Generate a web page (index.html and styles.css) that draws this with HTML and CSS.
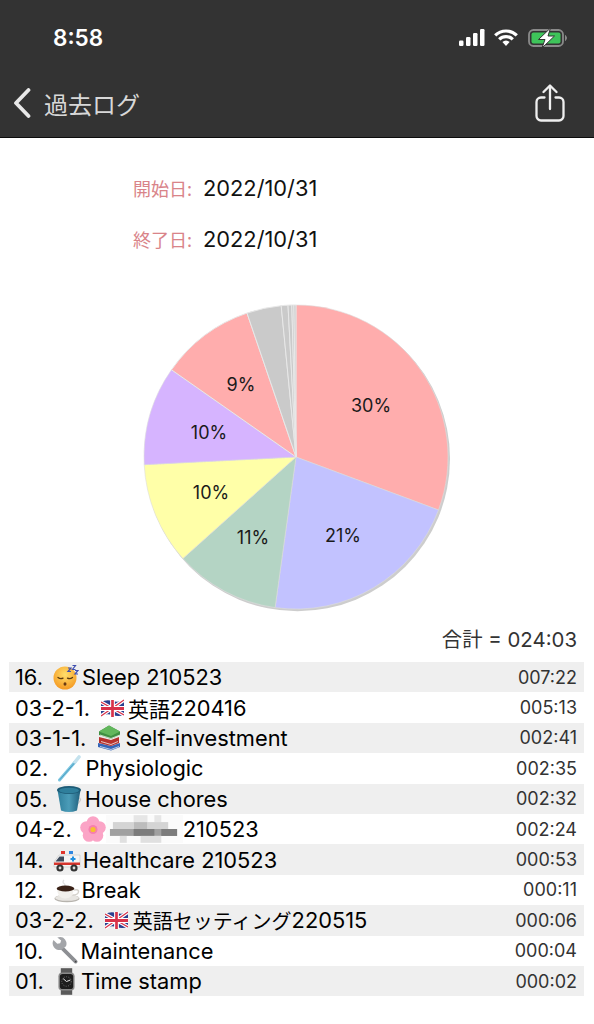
FILE: index.html
```html
<!DOCTYPE html>
<html lang="ja">
<head>
<meta charset="utf-8">
<title>過去ログ</title>
<link rel="stylesheet" href="styles.css">
</head>
<body>
<svg class="defs" width="0" height="0" aria-hidden="true">
  <defs>
    <radialGradient id="faceGrad" cx="50%" cy="35%" r="65%"><stop offset="0" stop-color="#ffdf6b"/><stop offset="1" stop-color="#f59a23"/></radialGradient>
    <linearGradient id="bucketGrad" x1="0" x2="1" y1="0" y2="0"><stop offset="0" stop-color="#2f7f9c"/><stop offset=".5" stop-color="#4b9cb8"/><stop offset="1" stop-color="#1f5f7c"/></linearGradient>
    <symbol id="e-sleep" viewBox="0 0 26 26">
      <circle cx="12" cy="14" r="11.5" fill="url(#faceGrad)"/>
      <path d="M5 13.5q2.5 2 5 .6M14.500 14.100q2.500 1.400 5-.6" fill="none" stroke="#5a3a10" stroke-width="1.300" stroke-linecap="round"/>
      <ellipse cx="12" cy="20" rx="1.500" ry="1.800" fill="#6a3a12"/>
      <path d="M15 4h3l-3 3.500h3M19.500 1.500h3l-3 4h3" fill="none" stroke="#3f4fb0" stroke-width="1.200"/>
      <path d="M22 6.500h3l-3 3.500h3" fill="none" stroke="#3f4fb0" stroke-width="1.200"/>
    </symbol>
    <symbol id="e-flag" viewBox="0 0 24 18" preserveAspectRatio="none">
      <path d="M0 3q6-3 12-1t12-1v15q-6 2-12 0t-12 1z" fill="#2a3f8f"/>
      <path d="M0 3L24 16M24 1L0 17" stroke="#fff" stroke-width="3.600"/>
      <path d="M0 3L24 16M24 1L0 17" stroke="#d8324a" stroke-width="1.300"/>
      <path d="M12 1v17M0 9.500h24" stroke="#fff" stroke-width="5"/>
      <path d="M12 1v17M0 9.500h24" stroke="#d8324a" stroke-width="2.800"/>
    </symbol>
    <symbol id="e-books" viewBox="0 0 24 26">
      <path d="M1 18l13 3 9-3v4l-9 3.500L1 22z" fill="#3565b8"/>
      <path d="M3 21.500l11 3 8-3" fill="none" stroke="#dfe6f0" stroke-width=".8"/>
      <path d="M2 12l12 3 8-3v6l-8 3-12-3z" fill="#b8322e"/>
      <path d="M4 16.500l10 3 7-3" fill="none" stroke="#eee" stroke-width=".8"/>
      <path d="M2 6.500l10-6 11 6v3.500l-9 4-12-4z" fill="#3f8f42"/>
      <path d="M2 6.500l10-6 11 6-9 4.500z" fill="#62b75c"/>
      <path d="M3 10l11 3.500 9-3.500" fill="none" stroke="#e4efdf" stroke-width=".8"/>
    </symbol>
    <symbol id="e-brush" viewBox="0 0 24 28">
      <path d="M2.500 26L18 8" stroke="#7cc6e0" stroke-width="3" stroke-linecap="round"/>
      <path d="M18 8l4-5" stroke="#c4e2ee" stroke-width="3.600" stroke-linecap="round"/>
      <path d="M3 25.500L17 9.500" stroke="#4d9fc4" stroke-width="1" stroke-linecap="round"/>
    </symbol>
    <symbol id="e-bucket" viewBox="0 0 26 28">
      <path d="M20 12q6 1 4 4t-5 5" fill="none" stroke="#c9c9c9" stroke-width="1.300"/>
      <path d="M1.500 5L5 25.500q8 3 16 0L24.500 5z" fill="url(#bucketGrad)"/>
      <ellipse cx="13" cy="5" rx="12" ry="4" fill="#1d5b76"/>
      <ellipse cx="13" cy="5.500" rx="10" ry="2.800" fill="#2f7f9c"/>
    </symbol>
    <symbol id="e-flower" viewBox="0 0 26 26">
      <g fill="#fba4c6">
        <circle cx="13" cy="6.500" r="6.300"/><circle cx="19.500" cy="11.500" r="6.300"/><circle cx="17" cy="19.500" r="6.300"/><circle cx="9" cy="19.500" r="6.300"/><circle cx="6.500" cy="11.500" r="6.300"/>
      </g>
      <circle cx="13" cy="13.500" r="4.500" fill="#f77fae"/>
      <circle cx="13" cy="13.500" r="2.600" fill="#f7c02f"/>
    </symbol>
    <symbol id="e-amb" viewBox="0 0 28 26">
      <path d="M1 15l5-7h21v12H1z" fill="#f4f4f4" stroke="#bbb" stroke-width=".5"/>
      <path d="M2.500 14.500L6.500 9.500H11v5z" fill="#3c4a5c"/>
      <rect x="1" y="15.500" width="26" height="2.500" fill="#d6352d"/>
      <path d="M20 9.500v5M17.500 12h5" stroke="#1f8fe0" stroke-width="2"/>
      <rect x="8" y="4" width="4" height="3" fill="#e0352d"/><rect x="16" y="4" width="4" height="3" fill="#2f86e0"/>
      <circle cx="7" cy="21" r="3.600" fill="#333"/><circle cx="7" cy="21" r="1.400" fill="#ddd"/>
      <circle cx="21" cy="21" r="3.600" fill="#333"/><circle cx="21" cy="21" r="1.400" fill="#ddd"/>
    </symbol>
    <symbol id="e-coffee" viewBox="0 0 26 26">
      <path d="M10 3q-2 2 0 3.500t0 3" fill="none" stroke="#e2e2e2" stroke-width="1.300"/>
      <ellipse cx="13" cy="21.500" rx="12.500" ry="3.800" fill="#b7b4ae"/>
      <ellipse cx="13" cy="20.800" rx="12" ry="3" fill="#e8e6e2"/>
      <path d="M3 11q0 10 8 10.500t9-10.500z" fill="#f2f0ec"/>
      <path d="M20 13q5-1 4.500 2t-6 3" fill="none" stroke="#d6d3cd" stroke-width="1.500"/>
      <ellipse cx="11.500" cy="11.500" rx="8.800" ry="3" fill="#3a2217"/>
    </symbol>
    <symbol id="e-wrench" viewBox="0 0 28 28">
      <path d="M10 11l14.500 14.500" stroke="#8d8f93" stroke-width="3.800" stroke-linecap="round"/>
      <path d="M1.500 3l4 4 3-.5 1-3L5.500.5q5.500-1.500 8 2t1 7l-5 4Q4.500 14 2 10.500T1.500 3z" fill="#a3a5a9"/>
      <circle cx="24.500" cy="25.500" r=".9" fill="#444"/>
    </symbol>
    <symbol id="e-watch" viewBox="0 0 20 28">
      <rect x="4" y="0" width="12" height="6" fill="#5a5a5a"/>
      <rect x="4" y="22" width="12" height="6" fill="#5a5a5a"/>
      <rect x="1.500" y="4.500" width="17" height="19" rx="4" fill="#8a8a8a"/>
      <rect x="3" y="6" width="14" height="16" rx="3" fill="#1d1d1d"/>
      <path d="M10 14l-3.500-3M10 14l4-1.500" stroke="#eee" stroke-width="1"/>
      <circle cx="10" cy="14" r="5" fill="none" stroke="#777" stroke-width="1" stroke-dasharray="1 1.500"/>
    </symbol>
  </defs>
</svg>

<header class="topbar">
  <div class="status">
    <span class="clock">8:58</span>
    <div class="status-icons">
      <svg class="ic-signal" viewBox="0 0 26 17"><g fill="#fff"><rect x="0" y="11.500" width="4.500" height="5.500" rx="1.200"/><rect x="7" y="8" width="4.500" height="9" rx="1.200"/><rect x="14" y="4" width="4.500" height="13" rx="1.200"/><rect x="21" y="0" width="4.500" height="17" rx="1.200"/></g></svg>
      <svg class="ic-wifi" viewBox="0 0 24 17"><path d="M1.200 6.400a15.500 15.500 0 0 1 21.600 0M5.200 10.300a9.800 9.800 0 0 1 13.600 0" fill="none" stroke="#fff" stroke-width="3.200"/><path d="M8.400 13l3.600 4 3.600-4a5 5 0 0 0-7.200 0z" fill="#fff"/></svg>
      <svg class="ic-batt" viewBox="0 0 40 20"><rect x="1" y="2" width="34" height="16" rx="4.500" fill="none" stroke="#8a8a8a" stroke-width="1.800"/><rect x="3.500" y="4.500" width="29" height="11" rx="2" fill="#3ec45a"/><path d="M37.500 7.500q2 2.500 0 5z" fill="#8a8a8a" stroke="#8a8a8a"/><path d="M22.500 0L10.500 11.500h6.500L14 20l12.500-12h-6.500z" fill="#fff" stroke="#333" stroke-width="1"/></svg>
    </div>
  </div>
  <nav class="navbar">
    <div class="nav-back">
      <svg class="ic-back" viewBox="0 0 18 30"><path d="M15.500 2L3 15l12.500 13" fill="none" stroke="#e8e8e8" stroke-width="3.800" stroke-linecap="round" stroke-linejoin="round"/></svg>
      <span class="nav-title">過去ログ</span>
    </div>
    <svg class="ic-share" viewBox="0 0 30 38"><path d="M9.500 13.500H6a4.500 4.500 0 0 0-4.500 4.500v14A4.500 4.500 0 0 0 6 36.500h18a4.500 4.500 0 0 0 4.500-4.500V18a4.500 4.500 0 0 0-4.500-4.500h-3.500M15 25V2M8.500 8L15 1.500 21.500 8" fill="none" stroke="#efefef" stroke-width="2.300" stroke-linecap="round" stroke-linejoin="round"/></svg>
  </nav>
</header>

<main class="content">
  <section class="dates">
    <div class="date-row"><span class="date-label">開始日:</span><span class="date-value">2022/10/31</span></div>
    <div class="date-row"><span class="date-label">終了日:</span><span class="date-value">2022/10/31</span></div>
  </section>

  <svg class="pie" viewBox="0 0 310 310" role="img" aria-label="円グラフ">
    <circle cx="156.500" cy="156.800" r="152.500" fill="#cdcdcd"/>
    <g stroke="#ddd" stroke-width=".6">
      <path d="M155 155V3A152 152 0 0 1 297.500 208Z" fill="#ffadad"/>
      <path d="M155 155L297.500 208A152 152 0 0 1 134.100 305.600Z" fill="#c2c2ff"/>
      <path d="M155 155L134.100 305.600A152 152 0 0 1 41.900 256.500Z" fill="#b4d4c4"/>
      <path d="M155 155L41.900 256.500A152 152 0 0 1 3.200 162.700Z" fill="#ffffa8"/>
      <path d="M155 155L3.200 162.700A152 152 0 0 1 30.500 67.800Z" fill="#d6b4ff"/>
    </g>
    <g stroke="#e8e8e8" stroke-width="1">
      <path d="M155 155L30.500 67.800A152 152 0 0 1 106 11.100Z" fill="#ffadad"/>
      <path d="M155 155L106 11.100A152 152 0 0 1 140.200 3.700Z" fill="#cacaca"/>
      <path d="M155 155L140.200 3.700A152 152 0 0 1 147 3.200Z" fill="#cacaca"/>
      <path d="M155 155L147 3.200A152 152 0 0 1 150.800 3Z" fill="#cacaca"/>
      <path d="M155 155L150.800 3A152 152 0 0 1 152.900 3Z" fill="#cacaca"/>
      <path d="M155 155L152.900 3A152 152 0 0 1 155 3Z" fill="#cacaca"/>
    </g>
    <g class="pie-labels" text-anchor="middle">
      <text x="230" y="110">30%</text>
      <text x="202" y="240">21%</text>
      <text x="112" y="242">11%</text>
      <text x="70" y="197">10%</text>
      <text x="68" y="137">10%</text>
      <text x="100" y="89">9%</text>
    </g>
  </svg>

  <div class="total">合計 = 024:03</div>

  <ul class="log">
    <li class="log-row"><span class="log-name">16.&nbsp;<svg class="em em-sleep"><use href="#e-sleep"/></svg>Sleep 210523</span><span class="log-time">007:22</span></li>
    <li class="log-row"><span class="log-name">03-2-1.&nbsp;<svg class="em em-flag"><use href="#e-flag"/></svg><span class="cjk">英語</span>220416</span><span class="log-time">005:13</span></li>
    <li class="log-row"><span class="log-name">03-1-1.&nbsp;<svg class="em em-books"><use href="#e-books"/></svg>Self-investment</span><span class="log-time">002:41</span></li>
    <li class="log-row"><span class="log-name">02.&nbsp;<svg class="em em-brush"><use href="#e-brush"/></svg>Physiologic</span><span class="log-time">002:35</span></li>
    <li class="log-row"><span class="log-name">05.&nbsp;<svg class="em em-bucket"><use href="#e-bucket"/></svg>House chores</span><span class="log-time">002:32</span></li>
    <li class="log-row"><span class="log-name">04-2.&nbsp;<svg class="em em-flower"><use href="#e-flower"/></svg><svg class="mosaic" viewBox="0 0 78 28" aria-hidden="true">
      <rect width="78" height="28" fill="#fbfbfb"/>
      <g fill="#e6e6e6"><rect x="28" y="0" width="14" height="7"/><rect x="49" y="0" width="7" height="7"/></g>
      <g fill="#d4d4d4"><rect x="7" y="7" width="21" height="7"/><rect x="42" y="7" width="21" height="7"/></g>
      <g fill="#bcbcbc"><rect x="28" y="7" width="14" height="7"/></g>
      <rect x="4" y="14" width="68" height="7" fill="#a0a0a0"/>
      <g fill="#7c7c7c"><rect x="28" y="14" width="21" height="7"/><rect x="56" y="14" width="16" height="7"/></g>
      <g fill="#e0e0e0"><rect x="14" y="21" width="7" height="7"/><rect x="35" y="21" width="21" height="7"/></g>
    </svg>210523</span><span class="log-time">002:24</span></li>
    <li class="log-row"><span class="log-name">14.&nbsp;<svg class="em em-amb"><use href="#e-amb"/></svg>Healthcare 210523</span><span class="log-time">000:53</span></li>
    <li class="log-row"><span class="log-name">12.&nbsp;<svg class="em em-coffee"><use href="#e-coffee"/></svg>Break</span><span class="log-time">000:11</span></li>
    <li class="log-row"><span class="log-name">03-2-2.&nbsp;<svg class="em em-flag2"><use href="#e-flag"/></svg><span class="cjk cjk-long">英語セッティング</span>220515</span><span class="log-time">000:06</span></li>
    <li class="log-row"><span class="log-name">10.&nbsp;<svg class="em em-wrench"><use href="#e-wrench"/></svg>Maintenance</span><span class="log-time">000:04</span></li>
    <li class="log-row"><span class="log-name">01.&nbsp;<svg class="em em-watch"><use href="#e-watch"/></svg>Time stamp</span><span class="log-time">000:02</span></li>
  </ul>
</main>
</body>
</html>
```

FILE: styles.css
```css
* { box-sizing: border-box; }
html, body { margin: 0; padding: 0; background: #fff; }
body {
  font-family: Inter, "Noto Sans CJK JP", sans-serif;
  color: #111;
  overflow: hidden;
}
.defs { position: absolute; }

.topbar {
  height: 138px;
  background: #333;
  border-bottom: 1px solid #0c0c0c;
}
.status {
  height: 75px;
  display: flex;
  align-items: center;
  justify-content: space-between;
  padding: 0 26px 0 53px;
}
.clock {
  color: #fff;
  font-size: 22.500px;
  font-weight: 600;
}
.status-icons { display: flex; align-items: center; }
.ic-signal { width: 26px; height: 17px; margin-right: 9px; }
.ic-wifi { width: 24px; height: 17px; margin-right: 10px; }
.ic-batt { width: 40px; height: 20px; }

.navbar {
  height: 62px;
  display: flex;
  align-items: center;
  justify-content: space-between;
  padding: 0 29px 6px 13px;
}
.nav-back { display: flex; align-items: center; }
.ic-back { width: 18px; height: 30px; margin-right: 13px; }
.nav-title {
  color: #d8d8d8;
  font-size: 24px;
  font-weight: 400;
  font-family: "Noto Sans CJK JP", sans-serif;
}
.ic-share { width: 30px; height: 38px; }

.dates { padding: 24px 0 0 133px; }
.date-row {
  height: 51px;
  display: flex;
  align-items: center;
}
.date-label {
  width: 70px;
  color: #d98489;
  font-size: 18px;
  font-weight: 400;
  font-family: "Noto Sans CJK JP", sans-serif;
}
.date-value {
  font-size: 21.800px;
  color: #111;
}

.pie {
  display: block;
  width: 310px;
  height: 310px;
  margin: 38px 0 0 141px;
}
.pie-labels text {
  font-size: 18px;
  fill: #1a1a1a;
}

.total {
  height: 28px;
  margin-top: 14px;
  padding-right: 17px;
  margin-bottom: 8px;
  text-align: right;
  font-size: 20.400px;
  line-height: 28px;
  color: #333;
}

.log {
  list-style: none;
  margin: 0 10px 0 9px;
  padding: 0;
}
.log-row {
  height: 30.400px;
  padding: 0 7px 0 6px;
  display: flex;
  align-items: center;
  justify-content: space-between;
}
.log-row:nth-child(odd) { background: #efefef; }
.log-name {
  display: flex;
  align-items: center;
  font-size: 21.800px;
  color: #000;
  white-space: nowrap;
}
.log-time {
  font-size: 18px;
  color: #333;
}
.cjk { font-size: 21px; }
.cjk-long { font-size: 20px; }
.em { flex: none; display: block; }
.em-sleep { width: 26px; height: 26px; margin: 0 3px 0 4px; }
.em-flag { width: 23px; height: 18px; margin: 0 4px 0 5px; }
.em-flag2 { width: 23px; height: 18px; margin: 0 5px 0 5px; }
.em-books { width: 24px; height: 26px; margin: 0 4px 0 5px; }
.em-brush { width: 24px; height: 28px; margin: 0 4px 0 3px; }
.em-bucket { width: 26px; height: 28px; margin: 0 3px 0 2px; }
.em-flower { width: 26px; height: 26px; margin: 0 0 0 2px; }
.em-amb { width: 28px; height: 26px; margin: 0 2px 0 3px; }
.em-coffee { width: 26px; height: 26px; margin: 0 2px 0 4px; }
.em-wrench { width: 27px; height: 27px; margin: 0 1px 0 3px; }
.em-watch { width: 19px; height: 27px; margin: 0 5px 0 7px; }
.mosaic { width: 77px; height: 28px; flex: none; display: block; }
```
